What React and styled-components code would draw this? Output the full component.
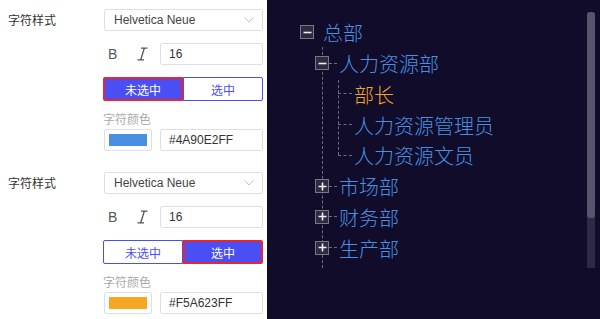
import React from "react";
import styled, { createGlobalStyle } from "styled-components";

const Global = createGlobalStyle`
  html, body { margin: 0; padding: 0; background: #fff; }
  body { font-family: "Liberation Sans", "Noto Sans CJK SC", sans-serif; }
  * { box-sizing: border-box; }
`;

const Page = styled.div`
  width: 600px;
  height: 319px;
  display: flex;
  overflow: hidden;
`;

const Side = styled.div`
  width: 267px;
  background: #fff;
  padding: 9px 0 0 8px;
  display: flex;
  flex-direction: column;
  gap: 21px;
`;

const Group = styled.div`
  display: grid;
  grid-template-columns: 95px 160px;
`;

const Label = styled.div`
  font-family: "Noto Sans CJK SC", sans-serif;
  font-size: 12px;
  line-height: 22px;
  color: #333;
`;

const Controls = styled.div`
  display: flex;
  flex-direction: column;
`;

const Select = styled.div`
  height: 22px;
  margin-left: 1px;
  border: 1px solid #dcdfe6;
  border-radius: 2px;
  padding: 0 8px 0 9px;
  display: flex;
  align-items: center;
  justify-content: space-between;
  font-family: "Liberation Sans", sans-serif;
  font-size: 12px;
  color: #444;
`;

const StyleRow = styled.div`
  margin-top: 12px;
  height: 22px;
  display: flex;
  align-items: center;
`;

const Bold = styled.span`
  margin-left: 5px;
  width: 10px;
  font-family: "Liberation Sans", sans-serif;
  font-size: 14px;
  color: #555;
`;

const ItalicIcon = styled.svg`
  margin-left: 19px;
  flex: none;
`;

const Field = styled.div`
  margin-left: auto;
  width: 103px;
  height: 22px;
  border: 1px solid #dcdfe6;
  border-radius: 2px;
  padding-left: 8px;
  display: flex;
  align-items: center;
  font-family: "Liberation Sans", sans-serif;
  font-size: 12px;
  color: #333;
`;

const Toggle = styled.div`
  margin-top: 12px;
  height: 24px;
  display: grid;
  grid-template-columns: 80px 80px;
`;

const ToggleBtn = styled.div`
  display: flex;
  align-items: center;
  justify-content: center;
  font-family: "Noto Sans CJK SC", sans-serif;
  font-size: 12px;
  background: ${(p) => (p.$on ? "#4a4ff5" : "#fff")};
  color: ${(p) => (p.$on ? "#fff" : "#4a4ff5")};
  border: ${(p) => (p.$on ? "2px solid #e8262e" : "1px solid #4a4ff5")};
  border-radius: ${(p) => (p.$left ? "2px 0 0 2px" : "0 2px 2px 0")};
`;

const ColorLabel = styled.div`
  margin-top: 10px;
  line-height: 16px;
  font-family: "Noto Sans CJK SC", sans-serif;
  font-size: 12px;
  color: #aaa;
`;

const ColorRow = styled.div`
  margin-top: 2px;
  display: flex;
  align-items: center;
`;

const Swatch = styled.div`
  margin-left: 1px;
  width: 48px;
  height: 22px;
  border: 1px solid #dcdfe6;
  border-radius: 2px;
  padding: 4px;
  display: flex;
  & > span {
    flex: 1;
    background: ${(p) => p.$color};
  }
`;

const Chevron = () => (
  <svg width="10" height="6" viewBox="0 0 10 6">
    <path d="M0.5 0.5 L5 5 L9.5 0.5" fill="none" stroke="#c0c4cc" strokeWidth="1" />
  </svg>
);

const Italic = () => (
  <ItalicIcon width="11" height="14" viewBox="0 0 11 14">
    <path
      d="M4 1.2 H10.5 M0.5 12.8 H7 M7.3 1.2 L3.7 12.8"
      fill="none"
      stroke="#555"
      strokeWidth="1.3"
    />
  </ItalicIcon>
);

const StyleGroup = ({ selected, color, hex }) => (
  <Group>
    <Label>字符样式</Label>
    <Controls>
      <Select>
        <span>Helvetica Neue</span>
        <Chevron />
      </Select>
      <StyleRow>
        <Bold>B</Bold>
        <Italic />
        <Field>16</Field>
      </StyleRow>
      <Toggle>
        <ToggleBtn $left $on={!selected}>未选中</ToggleBtn>
        <ToggleBtn $on={selected}>选中</ToggleBtn>
      </Toggle>
      <ColorLabel>字符颜色</ColorLabel>
      <ColorRow>
        <Swatch $color={color}><span /></Swatch>
        <Field>{hex}</Field>
      </ColorRow>
    </Controls>
  </Group>
);

/* ---------- Tree ---------- */

const Dark = styled.div`
  flex: 1;
  background: #100c2a;
  display: flex;
  padding: 18px 5px 0 33px;
`;

const TreeArea = styled.div`
  flex: 1;
`;

const ROW = "30.75px";
const LINE = "#6b6a80";

const Row = styled.div`
  height: ${ROW};
  display: flex;
  align-items: center;
  font-family: "Noto Sans CJK SC", sans-serif;
  font-weight: 300;
  font-size: 20px;
  color: ${(p) => (p.$active ? "#f5a623" : "#4a90e2")};
`;

const Box = styled.span`
  position: relative;
  z-index: 1;
  width: 14px;
  height: 14px;
  flex: none;
  border: 1.5px solid #77768a;
  background: #2c2b3f;
  display: flex;
  align-items: center;
  justify-content: center;
  margin-top: -2px;
`;

const Connector = styled.span`
  width: ${(p) => p.$w}px;
  flex: none;
  border-top: 1px dashed ${LINE};
  margin-right: 2px;
  margin-top: -2px;
`;

const Text = styled.span`
  margin-left: ${(p) => p.$gap || 0}px;
  line-height: 1;
`;

const Level1 = styled.div`
  position: relative;
  margin-left: 15px;
  padding-bottom: 4px;
  &::before {
    content: "";
    position: absolute;
    left: 7px;
    top: -2px;
    bottom: 0;
    border-left: 1px dashed ${LINE};
  }
`;

const Level2 = styled.div`
  position: relative;
  margin-left: 23px;
  &::before {
    content: "";
    position: absolute;
    left: 0;
    top: 0;
    height: calc(100% - 17px);
    border-left: 1px dashed ${LINE};
  }
`;

const Minus = () => (
  <svg width="9" height="9" viewBox="0 0 9 9">
    <path d="M0.5 4.5 H8.5" stroke="#eeeef4" strokeWidth="1.6" />
  </svg>
);
const Plus = () => (
  <svg width="9" height="9" viewBox="0 0 9 9">
    <path d="M0.5 4.5 H8.5 M4.5 0.5 V8.5" stroke="#eeeef4" strokeWidth="1.6" />
  </svg>
);

const Scroll = styled.div`
  width: 8px;
  margin-top: -6px;
  height: 256px;
  background: #2d2a47;
  border-radius: 3px 3px 0 0;
  display: flex;
  flex-direction: column;
`;

const Thumb = styled.div`
  height: 206px;
  background: #57556b;
  border-radius: 3px;
`;

const Tree = () => (
  <TreeArea>
    <Row>
      <Box><Minus /></Box>
      <Text $gap={9}>总部</Text>
    </Row>
    <Level1>
      <Row>
        <Box><Minus /></Box>
        <Connector $w={8} />
        <Text>人力资源部</Text>
      </Row>
      <Level2>
        <Row $active>
          <Connector $w={14} />
          <Text>部长</Text>
        </Row>
        <Row>
          <Connector $w={14} />
          <Text>人力资源管理员</Text>
        </Row>
        <Row>
          <Connector $w={14} />
          <Text>人力资源文员</Text>
        </Row>
      </Level2>
      {["市场部", "财务部", "生产部"].map((n) => (
        <Row key={n}>
          <Box><Plus /></Box>
          <Connector $w={8} />
          <Text>{n}</Text>
        </Row>
      ))}
    </Level1>
  </TreeArea>
);

export default function App() {
  return (
    <>
      <Global />
      <Page>
        <Side>
          <StyleGroup selected={false} color="#4a90e2" hex="#4A90E2FF" />
          <StyleGroup selected color="#f5a623" hex="#F5A623FF" />
        </Side>
        <Dark>
          <Tree />
          <Scroll>
            <Thumb />
          </Scroll>
        </Dark>
      </Page>
    </>
  );
}
